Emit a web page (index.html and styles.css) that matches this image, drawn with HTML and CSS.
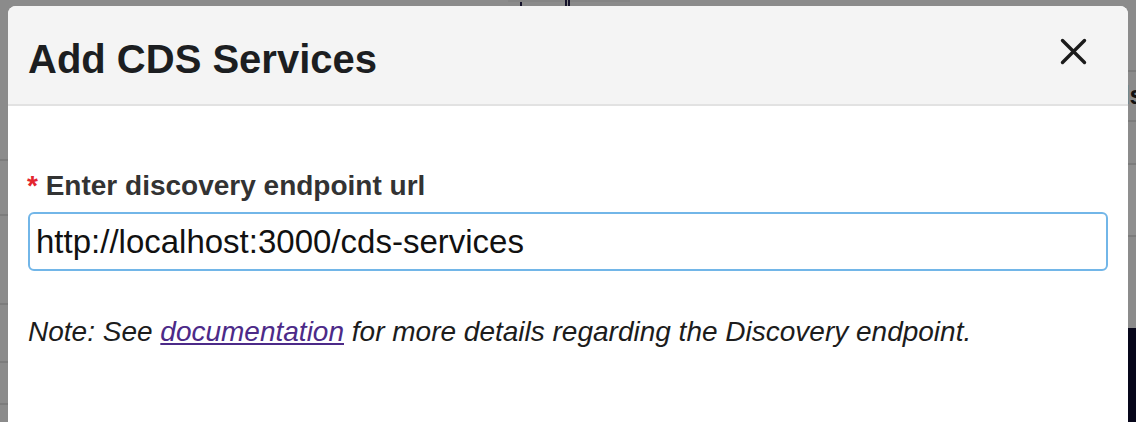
FILE: index.html
```html
<!DOCTYPE html>
<html lang="en">
<head>
<meta charset="utf-8">
<title>Add CDS Services</title>
<link rel="stylesheet" href="styles.css">
</head>
<body>
<div class="backdrop">
  <div class="bcol bleft">
    <div class="brow" style="height:159px"></div>
    <div class="brow" style="height:53px"></div>
    <div class="brow" style="height:87px"></div>
    <div class="brow" style="height:56px"></div>
    <div class="brow" style="height:40px"></div>
  </div>
  <div class="bcol bmid">
    <div class="topstrip">
      <span class="mark m1"></span>
      <span class="band"></span>
      <span class="mark m2"></span>
      <span class="mark m3"></span>
    </div>
  </div>
  <div class="bcol bright">
    <div class="brow" style="height:70px"></div>
    <div class="brow rtext" style="height:48px"><span>ds</span></div>
    <div class="brow" style="height:41px"></div>
    <div class="brow light" style="height:70px"></div>
    <div class="rgap"></div>
    <div class="rdark"></div>
  </div>
</div>

<div class="modal" role="dialog" aria-labelledby="modal-title">
  <div class="modal-header">
    <h1 id="modal-title" class="modal-title">Add CDS Services</h1>
    <button class="close" aria-label="Close">
      <svg width="27" height="27" viewBox="0 0 27 27" aria-hidden="true">
        <path d="M2.5 2.5 L24.5 24.5 M24.5 2.5 L2.5 24.5" stroke="#1b1b1b" stroke-width="3.4" stroke-linecap="round" fill="none"/>
      </svg>
    </button>
  </div>
  <div class="modal-body">
    <label class="field-label" for="endpoint"><span class="req">*</span> Enter discovery endpoint url</label>
    <input id="endpoint" class="field-input" type="text" value="http://localhost:3000/cds-services">
    <p class="note">Note: See <a href="#" class="doc-link">documentation</a> for more details regarding the Discovery endpoint.</p>
  </div>
</div>
</body>
</html>
```

FILE: styles.css
```css
html, body {
  margin: 0;
  padding: 0;
}

body {
  width: 1136px;
  height: 422px;
  overflow: hidden;
  position: relative;
  background: #8b8b8b;
  font-family: "Liberation Sans", Arial, sans-serif;
}

.backdrop {
  display: grid;
  grid-template-columns: 8px 1fr 8px;
  height: 422px;
}

.bcol {
  display: flex;
  flex-direction: column;
  overflow: hidden;
}

.brow {
  flex: none;
  border-bottom: 2px solid #7c7c7c;
}

.topstrip {
  position: relative;
  height: 6px;
}

.mark {
  position: absolute;
  top: 0;
  width: 2px;
  height: 6px;
  background: #14122a;
}

.m1 { left: 512px; }
.m2 { left: 557px; }
.m3 { left: 560px; }

.band {
  position: absolute;
  top: 0;
  left: 500px;
  width: 122px;
  height: 2px;
  background: #858585;
}

.bright .brow.light {
  background: #8f8f8f;
}

.rtext {
  position: relative;
}

.rtext span {
  position: absolute;
  right: -8px;
  top: 8px;
  font-weight: bold;
  font-size: 26px;
  color: #111;
  line-height: 30px;
}

.rgap {
  flex: none;
  height: 91px;
}

.rdark {
  flex: 1;
  background: #07061a;
}

.modal {
  position: absolute;
  left: 8px;
  top: 6px;
  width: 1120px;
  height: 416px;
  background: #ffffff;
  border-radius: 8px 8px 0 0;
  overflow: hidden;
}

.modal-header {
  display: flex;
  justify-content: space-between;
  align-items: flex-start;
  padding: 29px 41px 21px 20px;
  background: #f4f4f4;
  border-bottom: 2px solid #e2e2e2;
}

.modal-title {
  margin: 0;
  font-size: 40px;
  line-height: 48px;
  font-weight: bold;
  color: #1c1e21;
}

.close {
  margin: 3px 0 0 0;
  padding: 0;
  border: 0;
  background: transparent;
  width: 27px;
  height: 27px;
  display: block;
  cursor: pointer;
}

.close svg {
  display: block;
}

.modal-body {
  display: flex;
  flex-direction: column;
  padding: 64px 20px 0 20px;
}

.field-label {
  font-size: 28px;
  line-height: 32px;
  font-weight: bold;
  color: #333333;
}

.req {
  color: #e3262e;
  margin-left: -1px;
}

.field-input {
  margin-top: 10px;
  box-sizing: border-box;
  width: 1080px;
  height: 59px;
  border: 2px solid #72b6e8;
  border-radius: 6px;
  padding: 0 0 0 6px;
  font-family: "Liberation Sans", Arial, sans-serif;
  font-size: 33px;
  color: #111111;
  background: #ffffff;
  outline: none;
}

.note {
  margin: 45px 0 0 0;
  font-size: 28px;
  line-height: 32px;
  font-style: italic;
  color: #1c1c1c;
}

.doc-link {
  color: #4c2a88;
  text-decoration: underline;
}
```
